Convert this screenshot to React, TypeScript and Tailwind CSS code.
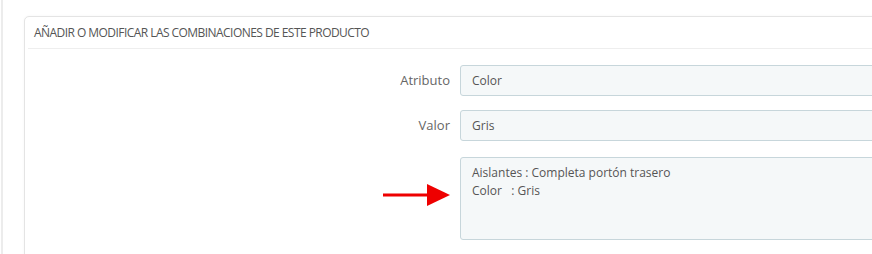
import React from 'react';

const FieldRow: React.FC<{ label: React.ReactNode; children: React.ReactNode; alignTop?: boolean }> = ({ label, children, alignTop }) => (
    <div className={`flex ${alignTop ? 'items-start' : 'items-center'}`}>
        <div className="w-[435px] shrink-0 pr-[10px] flex justify-end text-[13px] text-[#666]">
            {label}
        </div>
        <div className="flex-1">{children}</div>
    </div>
);

const RedArrow = () => (
    <svg width="67" height="22" viewBox="0 0 67 22" className="mt-[27px]">
        <rect x="0" y="9.5" width="46" height="3" fill="#ee0000" />
        <polygon points="44,0 67,11 44,22" fill="#ee0000" />
    </svg>
);

export default function App() {
    return (
        <div className="w-[872px] h-[254px] overflow-hidden bg-white font-['Open_Sans',sans-serif]">
            <div className="h-full ml-[1px] border-l-[2px] border-[#ececec] pl-[21px] pt-[16px]">
                <div className="w-[920px] h-[300px] border border-[#e4e4e4] rounded-[5px] bg-white shadow-[0_0_3px_rgba(0,0,0,0.04)]">
                    <div className="mx-[3px] h-[32px] border-b border-[#eeeeee] px-[6px] flex items-center">
                        <h3 className="text-[12px] font-medium text-[#555] uppercase tracking-[-0.55px]">
                            Añadir o modificar las combinaciones de este producto
                        </h3>
                    </div>
                    <div className="pt-[16px] flex flex-col gap-[14px]">
                        <FieldRow label="Atributo">
                            <div className="h-[31px] border border-[#c7d6db] rounded-[3px] bg-[#f5f8f9] px-[11px] flex items-center text-[12px] text-[#555]">
                                Color
                            </div>
                        </FieldRow>
                        <FieldRow label="Valor">
                            <div className="h-[31px] border border-[#c7d6db] rounded-[3px] bg-[#f5f8f9] px-[11px] flex items-center text-[12px] text-[#555]">
                                Gris
                            </div>
                        </FieldRow>
                        <div className="mt-[2px]">
                            <FieldRow label={<RedArrow />} alignTop>
                                <div className="h-[83px] border border-[#c7d6db] rounded-[3px] bg-[#f5f8f9] px-[11px] pt-[6px] text-[12px] leading-[18px] text-[#555] whitespace-pre">
                                    {'Aislantes : Completa portón trasero\nColor   : Gris'}
                                </div>
                            </FieldRow>
                        </div>
                    </div>
                </div>
            </div>
        </div>
    );
}
